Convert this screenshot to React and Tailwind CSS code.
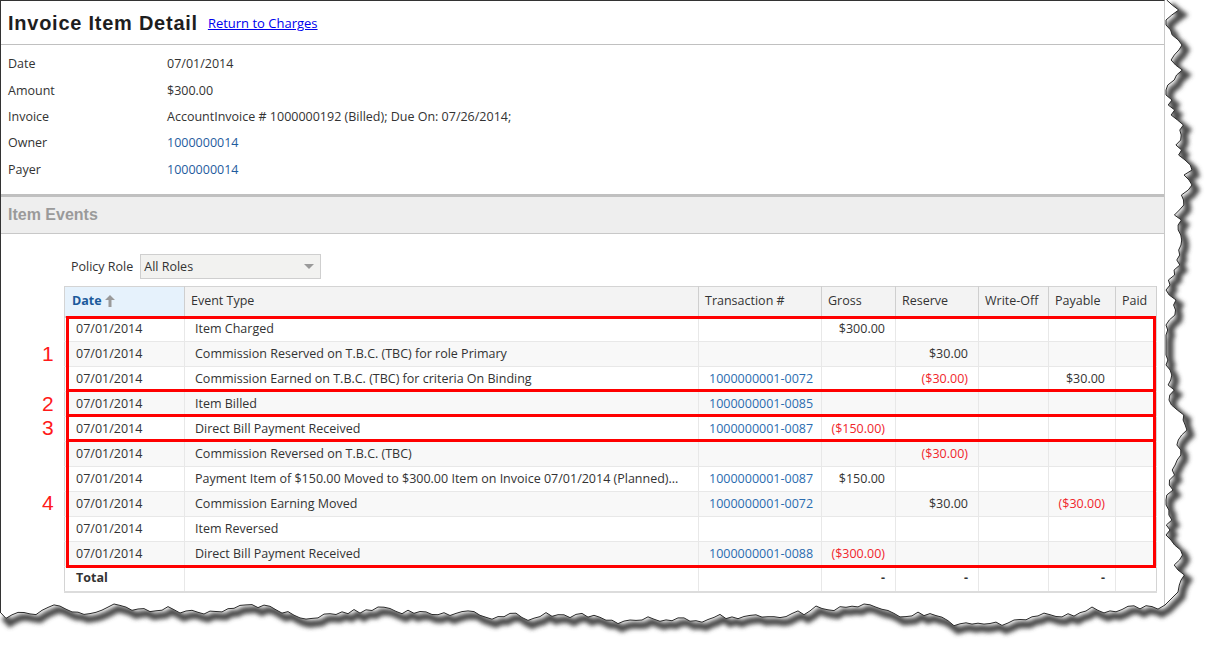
import React from "react";

const cols = [120, 514, 123, 74, 83, 70, 67, 41];
const rows = [
  ["Item Charged", "", ["$300.00", 0], null, null, null],
  ["Commission Reserved on T.B.C. (TBC) for role Primary", "", null, ["$30.00", 0], null, null],
  ["Commission Earned on T.B.C. (TBC) for criteria On Binding", "1000000001-0072", null, ["($30.00)", 1], null, ["$30.00", 0]],
  ["Item Billed", "1000000001-0085", null, null, null, null],
  ["Direct Bill Payment Received", "1000000001-0087", ["($150.00)", 1], null, null, null],
  ["Commission Reversed on T.B.C. (TBC)", "", null, ["($30.00)", 1], null, null],
  ["Payment Item of $150.00 Moved to $300.00 Item on Invoice 07/01/2014 (Planned)...", "1000000001-0087", ["$150.00", 0], null, null, null],
  ["Commission Earning Moved", "1000000001-0072", null, ["$30.00", 0], null, ["($30.00)", 1]],
  ["Item Reversed", "", null, null, null, null],
  ["Direct Bill Payment Received", "1000000001-0088", ["($300.00)", 1], null, null, null],
];

function makeRng(seed) {
  let s = seed;
  return () => {
    s = (s * 16807) % 2147483647;
    return (s - 1) / 2147483646;
  };
}

function buildEdge() {
  const r = makeRng(12345);
  const pts = [];
  let x = 1172;
  for (let y = 0; y <= 585; y += 5) {
    x += (r() - 0.5) * 14 + (1175 - x) * 0.1;
    if (x < 1166) x = 1166;
    if (x > 1192) x = 1192;
    pts.push([x, y]);
  }
  pts.push([1178, 592]);
  pts.push([1165, 605]);
  let y = 612;
  for (let xx = 1158; xx >= 0; xx -= 6) {
    y += (r() - 0.5) * 8 + (615 - y) * 0.1;
    if (y < 604) y = 604;
    if (y > 628) y = 628;
    pts.push([xx, y]);
  }
  pts[pts.length - 1] = [0, 612];
  return pts;
}

const edge = buildEdge();
const edgeLine = "M " + edge.map((p) => p[0].toFixed(1) + " " + p[1].toFixed(1)).join(" L ");
const outside = edgeLine + " L 0 655 L 1210 655 L 1210 0 Z";

function TornEdge() {
  return (
    <svg className="absolute left-0 top-0 pointer-events-none" width="1210" height="655" viewBox="0 0 1210 655">
      <defs>
        <filter id="blur" x="-10%" y="-10%" width="120%" height="120%">
          <feGaussianBlur stdDeviation="2" />
        </filter>
        <clipPath id="outclip">
          <path d={outside} />
        </clipPath>
      </defs>
      <path d={outside} fill="#ffffff" />
      <g clipPath="url(#outclip)">
        <path d={edgeLine} transform="translate(4 5)" fill="none" stroke="#4a4a4a" strokeWidth="7" filter="url(#blur)" />
      </g>
      <path d={edgeLine} fill="none" stroke="#2a2a2a" strokeWidth="1" />
    </svg>
  );
}

function Money({ v }) {
  if (!v) return null;
  return <span className={v[1] ? "text-[#f0262c]" : "text-[#333]"}>{v[0]}</span>;
}

export default function App() {
  return (
    <div className="relative w-[1210px] h-[655px] bg-white overflow-hidden font-['Open_Sans',sans-serif] text-[#333]">
      <div className="w-[1165px] h-[655px] border-l border-t border-l-[#333] border-t-[#333] border-r border-r-[#c8c8c8]">
        {/* Header */}
        <div className="h-[44px] flex items-center pl-[7px] gap-[10px] border-b border-[#c0c0c0]">
          <span className="font-['Liberation_Sans',Arial,sans-serif] font-bold text-[20px] tracking-[0.75px] text-[#1e1e1e]">Invoice Item Detail</span>
          <a className="text-[13px] text-[#0000ee] underline mt-[2px]" href="#">Return to Charges</a>
        </div>
        {/* Details */}
        <div className="pt-[6px] pb-[10px] text-[12.5px]">
          {[
            ["Date", "07/01/2014", 0, 27],
            ["Amount", "$300.00", 0, 26],
            ["Invoice", "AccountInvoice # 1000000192 (Billed); Due On: 07/26/2014;", 0, 26],
            ["Owner", "1000000014", 1, 27],
            ["Payer", "1000000014", 1, 27],
          ].map(([k, v, link, h]) => (
            <div key={k} className="flex items-center" style={{ height: h }}>
              <div className="w-[166px] pl-[7px]">{k}</div>
              <div className={link ? "text-[#1f5c9e]" : ""}>{v}</div>
            </div>
          ))}
        </div>
        {/* Item Events band */}
        <div className="h-[40px] flex items-center pl-[7px] bg-[#eeeeee] border-t-[3px] border-t-[#c0c0c0] border-b border-b-[#c8c8c8]">
          <span className="font-['Liberation_Sans',Arial,sans-serif] font-bold text-[16px] text-[#9a9a9a]">Item Events</span>
        </div>
        {/* Policy role */}
        <div className="pl-[70px] pt-[20px] flex items-center gap-[7px] text-[12.5px]">
          <span className="mt-[2px]">Policy Role</span>
          <div className="w-[181px] h-[25px] bg-[#f2f2f0] border border-[#cfcfcf] flex items-center justify-between pl-[3px] pr-[6px]">
            <span className="mt-[1px]">All Roles</span>
            <svg width="10" height="6" viewBox="0 0 10 6"><path d="M0 0 L10 0 L5 5 Z" fill="#9a9a9a" /></svg>
          </div>
        </div>
        {/* Table */}
        <div className="relative ml-[63px] mt-[7px] w-[1093px]">
          <table className="table-fixed border-collapse w-[1093px] text-[12.5px] border border-[#d4d4d4] border-b-2 border-b-[#dcdcdc]">
            <colgroup>
              {cols.map((w, i) => (
                <col key={i} style={{ width: w }} />
              ))}
            </colgroup>
            <thead>
              <tr className="h-[30px] bg-[#f3f3f3] border-b-2 border-b-[#cfcfcf]">
                <th className="bg-[#e6f2fc] border-r border-[#cfcfcf] text-left font-normal pl-[7px]">
                  <span className="inline-flex items-center gap-[3px] font-bold text-[#1b5a9b]">
                    Date
                    <svg width="10" height="12" viewBox="0 0 10 12"><path d="M5 0 L10 5 L6.5 5 L6.5 12 L3.5 12 L3.5 5 L0 5 Z" fill="#9a9a9a" /></svg>
                  </span>
                </th>
                {["Event Type", "Transaction #", "Gross", "Reserve", "Write-Off", "Payable", "Paid"].map((h) => (
                  <th key={h} className="border-r border-[#cfcfcf] text-left font-normal pl-[6px] whitespace-nowrap">{h}</th>
                ))}
              </tr>
            </thead>
            <tbody>
              {rows.map((r, i) => (
                <tr key={i} className={"h-[25px] border-b border-[#e8e8e8] " + (i % 2 ? "bg-[#f8f8f8]" : "bg-white")}>
                  <td className="pl-[11px] border-r border-[#e8e8e8]">07/01/2014</td>
                  <td className="pl-[10px] border-r border-[#e8e8e8] whitespace-nowrap">{r[0]}</td>
                  <td className="pl-[10px] border-r border-[#e8e8e8] text-[#2a6cb0]">{r[1]}</td>
                  <td className="pr-[10px] text-right border-r border-[#e8e8e8]"><Money v={r[2]} /></td>
                  <td className="pr-[10px] text-right border-r border-[#e8e8e8]"><Money v={r[3]} /></td>
                  <td className="pr-[10px] text-right border-r border-[#e8e8e8]"><Money v={r[4]} /></td>
                  <td className="pr-[10px] text-right border-r border-[#e8e8e8]"><Money v={r[5]} /></td>
                  <td></td>
                </tr>
              ))}
              <tr className="h-[25px] bg-white">
                <td className="pl-[11px] border-r border-[#e8e8e8] font-bold">Total</td>
                <td className="border-r border-[#e8e8e8]"></td>
                <td className="border-r border-[#e8e8e8]"></td>
                <td className="pr-[10px] text-right border-r border-[#e8e8e8] font-bold">-</td>
                <td className="pr-[10px] text-right border-r border-[#e8e8e8] font-bold">-</td>
                <td className="border-r border-[#e8e8e8]"></td>
                <td className="pr-[10px] text-right border-r border-[#e8e8e8] font-bold">-</td>
                <td></td>
              </tr>
            </tbody>
          </table>
          {/* Annotation boxes */}
          <div className="absolute left-[2px] top-[30px] w-[1090px] h-[76px] border-[3px] border-[#ff0000]"></div>
          <div className="absolute left-[2px] top-[103px] w-[1090px] h-[28px] border-[3px] border-[#ff0000]"></div>
          <div className="absolute left-[2px] top-[128px] w-[1090px] h-[28px] border-[3px] border-[#ff0000]"></div>
          <div className="absolute left-[2px] top-[153px] w-[1090px] h-[129px] border-[3px] border-[#ff0000]"></div>
          <span className="absolute left-[-22px] top-[57px] text-[21px] leading-none text-[#ff1a1a] font-['Liberation_Sans',Arial,sans-serif]">1</span>
          <span className="absolute left-[-22px] top-[107px] text-[21px] leading-none text-[#ff1a1a] font-['Liberation_Sans',Arial,sans-serif]">2</span>
          <span className="absolute left-[-22px] top-[131px] text-[21px] leading-none text-[#ff1a1a] font-['Liberation_Sans',Arial,sans-serif]">3</span>
          <span className="absolute left-[-22px] top-[206px] text-[21px] leading-none text-[#ff1a1a] font-['Liberation_Sans',Arial,sans-serif]">4</span>
        </div>
      </div>
      <TornEdge />
    </div>
  );
}
